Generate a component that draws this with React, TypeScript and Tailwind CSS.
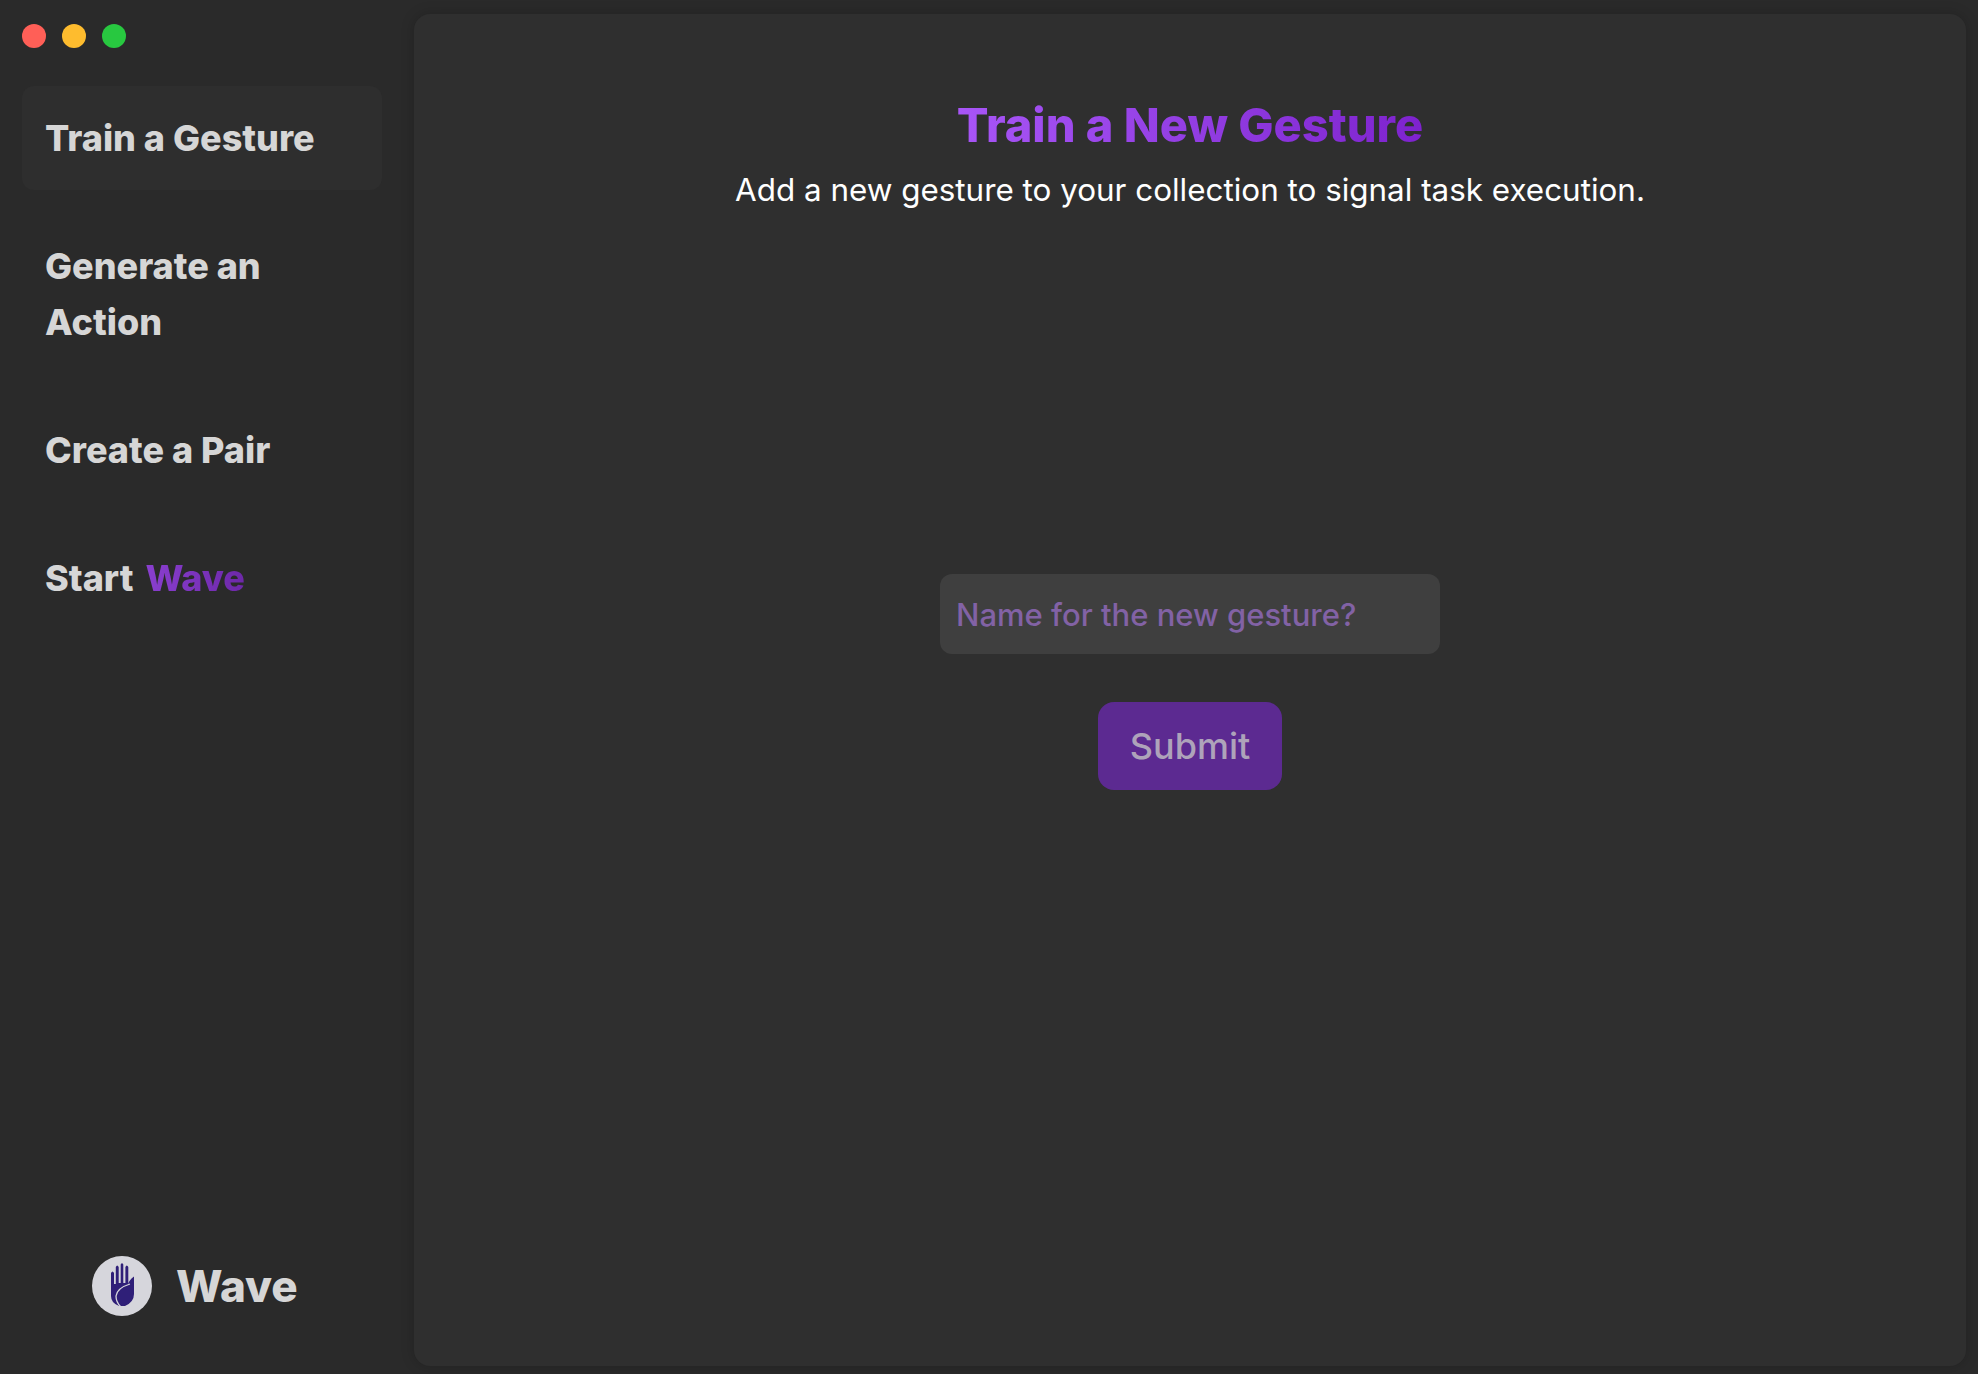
const navItemClass = "rounded-xl py-6 pl-[23px] pr-6 text-[36px] leading-[56px] font-extrabold text-[#d6d6d6]";

function WaveLogo() {
  return (
    <div className="h-[60px] w-[60px] shrink-0 rounded-full bg-[#d6d6dc]">
      <svg viewBox="0 0 60 60" className="h-full w-full">
        <path
          fill="#2f1f78"
          d="M19 40 L19 17 Q20.5 14 22 17 L22 28 L23.8 28 L23.8 11 Q25.2 8 26.7 11 L26.7 27 L28.7 27 L28.7 8.5 Q30 6 31.3 8.5 L31.3 27 L33.4 27 L33.4 11 Q34.8 8 36.3 11 L36.3 28 Q37 24 42 20.5 L42 38 Q42 46 33 50 L27 50 Q19 47 19 40 Z"
        />
        <path
          fill="none"
          stroke="#d6d6dc"
          strokeWidth="1.3"
          d="M38 28 Q25 32 24 40 Q24 46 28.5 50.5"
        />
      </svg>
    </div>
  );
}

export default function App() {
  return (
    <div className="flex h-screen bg-[#2a2a2a] font-['Inter',sans-serif]">
      <aside className="flex w-[414px] shrink-0 flex-col pl-[22px] pr-8">
        <div className="flex gap-4 pt-6">
          <span className="h-6 w-6 rounded-full bg-[#ff5f57]" />
          <span className="h-6 w-6 rounded-full bg-[#febc2e]" />
          <span className="h-6 w-6 rounded-full bg-[#28c840]" />
        </div>

        <nav className="mt-[38px] flex flex-col gap-6">
          <div className={`${navItemClass} bg-[#2e2e2e]`}>Train a Gesture</div>
          <div className={navItemClass}>Generate an Action</div>
          <div className={navItemClass}>Create a Pair</div>
          <div className={navItemClass}>
            Start{" "}
            <span className="ml-1 bg-gradient-to-r from-[#8a3fd0] to-[#6d28a8] bg-clip-text text-transparent">Wave</span>
          </div>
        </nav>

        <div className="mt-auto mb-[58px] ml-[70px] flex items-center gap-6">
          <WaveLogo />
          <span className="text-[44px] leading-none font-extrabold text-[#d6d6d6]">Wave</span>
        </div>
      </aside>

      <main className="mt-[14px] mb-2 mr-3 flex flex-1 flex-col items-center rounded-2xl bg-[#2f2f2f] pt-[83px] shadow-[0_0_14px_rgba(0,0,0,0.2)]">
        <h1 className="bg-gradient-to-r from-[#a855f7] to-[#7e22ce] bg-clip-text text-[47px] leading-[56px] font-extrabold text-transparent">
          Train a New Gesture
        </h1>
        <p className="mt-[13px] text-[31.4px] leading-[48px] text-white">
          Add a new gesture to your collection to signal task execution.
        </p>
        <input
          placeholder="Name for the new gesture?"
          className="mt-[360px] h-20 w-[500px] rounded-xl bg-[#3f3f3f] px-4 text-[31px] font-medium text-white outline-none placeholder:text-[#8262a5]"
        />
        <button className="mt-12 h-[88px] w-[184px] rounded-2xl bg-[#5c2a91] text-[36px] font-medium text-[#aea3ba]">
          Submit
        </button>
      </main>
    </div>
  );
}
